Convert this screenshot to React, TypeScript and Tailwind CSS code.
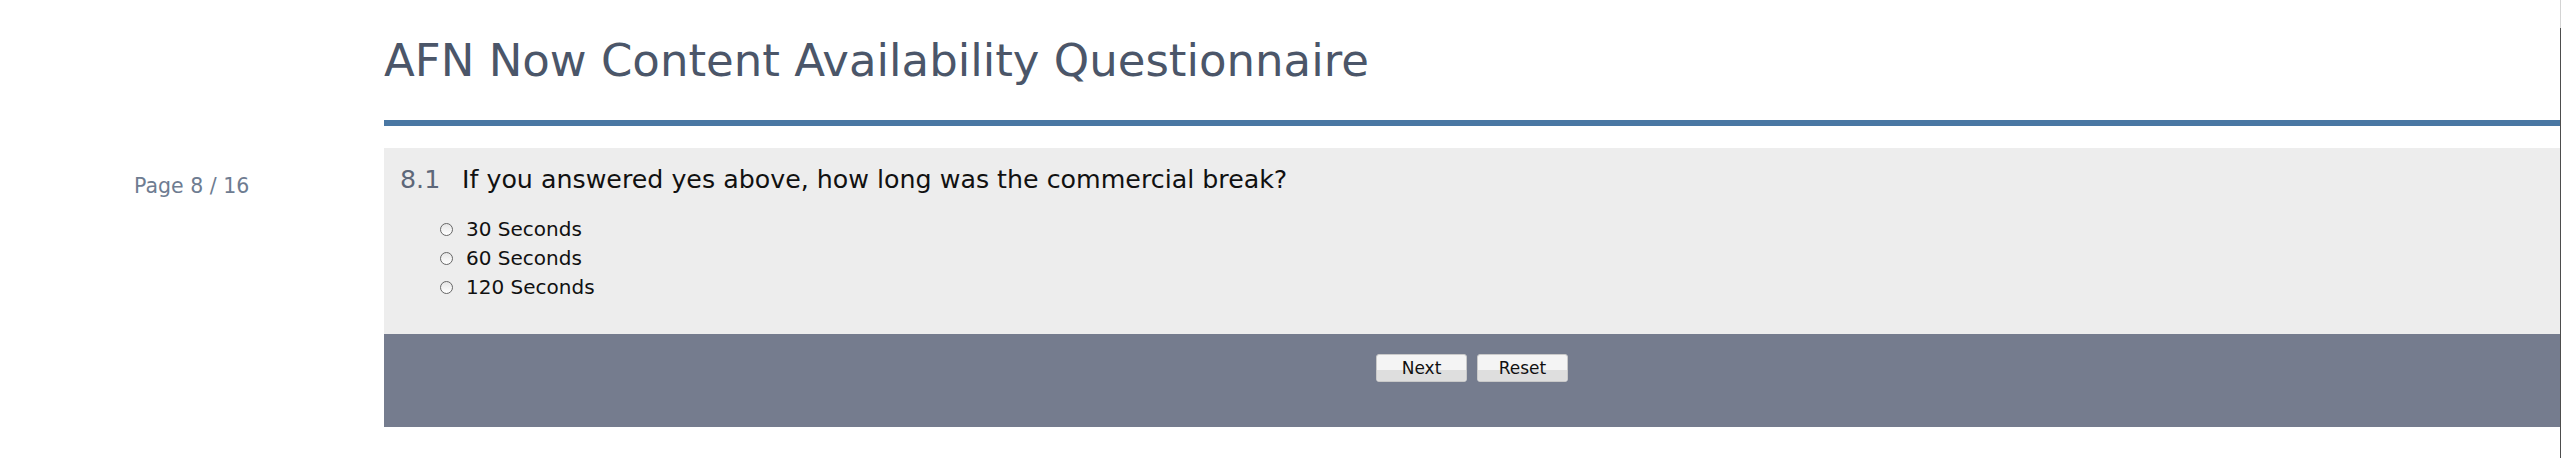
import React from 'react';

const font = { fontFamily: '"DejaVu Sans", Verdana, sans-serif' };

const options = ['30 Seconds', '60 Seconds', '120 Seconds'];

function Radio() {
  return (
    <span className="inline-block h-[13px] w-[13px] shrink-0 rounded-full border border-[#666] bg-gradient-to-b from-[#e6e6e6] to-white" />
  );
}

function FooterButton({ label }: { label: string }) {
  return (
    <button
      type="button"
      className="relative h-[28px] w-[91px] overflow-hidden rounded-[3px] border border-[#c9c9c9] bg-[#f4f4f4] text-[17px] leading-[26px] text-[#111]"
    >
      <span className="absolute inset-x-0 bottom-0 h-[11px] bg-[#dedede]" />
      <span className="relative">{label}</span>
    </button>
  );
}

export default function App() {
  return (
    <div className="flex h-[458px] w-[2561px] bg-white" style={font}>
      <aside className="w-[384px] shrink-0 pl-[134px] pt-[176px]">
        <p className="text-[20.5px] leading-[20px] text-[#6e7c91]">Page 8 / 16</p>
      </aside>

      <main className="w-[2176px] shrink-0">
        <header className="h-[120px] pt-[38px]">
          <h1 className="text-[45px] leading-[46px] text-[#4b5669]">AFN Now Content Availability Questionnaire</h1>
        </header>
        <div className="h-[6px] bg-[#4a77a3]" />

        <section className="mt-[22px] h-[186px] bg-[#ededed] px-[16px] pt-[19px]">
          <div className="flex items-baseline text-[25.3px] leading-[26px]">
            <span className="w-[62px] text-[#5d6779]">8.1</span>
            <span className="text-[#111]">If you answered yes above, how long was the commercial break?</span>
          </div>
          <ul className="mt-[22px] pl-[40px]">
            {options.map((o) => (
              <li key={o} className="flex h-[29px] items-center gap-[13px] text-[20px] leading-[29px] text-[#111]">
                <Radio />
                <span>{o}</span>
              </li>
            ))}
          </ul>
        </section>

        <footer className="flex h-[93px] justify-center gap-[10px] bg-[#757c8e] pt-[20px]">
          <FooterButton label="Next" />
          <FooterButton label="Reset" />
        </footer>
      </main>

      <div className="flex w-px flex-col">
        <div className="h-[28px] bg-[#d4d4d4]" />
        <div className="flex-1 bg-[#4d4d4d]" />
      </div>
    </div>
  );
}
